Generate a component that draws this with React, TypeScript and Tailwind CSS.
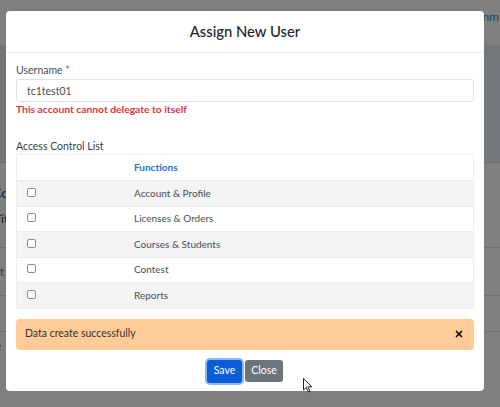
import { X } from "lucide-react"

const functions = [
  "Account & Profile",
  "Licenses & Orders",
  "Courses & Students",
  "Contest",
  "Reports",
]

function BackgroundPage() {
  return (
    <div className="flex flex-col w-[500px] h-[407px] bg-white text-[12px]">
      <div className="h-[45px] flex items-start justify-end pt-[8px] pr-[1px] gap-[20px] text-[#3d8fd6]">
        <span className="whitespace-nowrap shrink-0">Manage Accounts</span>
        <span className="whitespace-nowrap shrink-0">nm</span>
      </div>
      <div className="h-[118px] bg-[#e6eef6] border-b border-[#d0d7de]" />
      <div className="h-[58px] flex items-center font-bold text-[#1a6fc0] text-[14px] -ml-[8px]">
        Co
      </div>
      <div className="h-[16px] -mt-[10px] flex items-center -ml-[6px] text-[#333]">Title</div>
      <div className="h-[48px] mt-[20px] flex items-center -ml-[6px] border-t border-[#ddd] text-[#3d8fd6]">
        ct 3
      </div>
      <div className="h-[37px] border-t border-[#ddd] border-b" />
      <div className="h-[28px] flex items-center -ml-[8px] text-[#333]">le</div>
    </div>
  )
}

function Cursor() {
  return (
    <svg
      className="absolute left-[303px] top-[378px]"
      width="10"
      height="15"
      viewBox="0 0 10 15"
    >
      <path
        d="M0.5 0.5 L0.5 12 L3.3 9.4 L5.3 14 L7 13.3 L5 8.8 L8.8 8.8 Z"
        fill="#fff"
        stroke="#222"
        strokeWidth="1"
        strokeLinejoin="round"
      />
    </svg>
  )
}

export default function App() {
  return (
    <div
      className="relative w-[500px] h-[407px] overflow-hidden"
      style={{ fontFamily: 'Lato, "Open Sans", sans-serif' }}
    >
      <BackgroundPage />
      <div className="absolute inset-0 bg-black/50" />

      <div className="absolute inset-0 pt-[11px] pl-[6px]">
        <div className="w-[478px] bg-white rounded-[4px] flex flex-col">
          <div className="h-[42px] flex items-center justify-center border-b border-[#ececec]">
            <h5 className="text-[14.8px] font-medium text-[#212529]">Assign New User</h5>
          </div>

          <div className="px-[10px] pt-[9px] flex flex-col">
            <label className="text-[10.5px] leading-[16px] text-[#495057]">
              Username <span className="text-[#dc3545]">*</span>
            </label>
            <input
              readOnly
              value="tc1test01"
              className="mt-[1px] h-[23px] border border-[#dee2e6] rounded-[3px] px-[10px] text-[10.5px] text-[#495057] outline-none"
            />
            <div className="text-[10.3px] leading-[14px] font-bold text-[#dc3545]">
              This account cannot delegate to itself
            </div>

            <div className="mt-[23px] text-[10.5px] leading-[15px] text-[#3a3f44]">
              Access Control List
            </div>

            <div className="border border-[#eceeef] flex flex-col">
              <div className="h-[25px] flex items-center">
                <div className="w-[117px]" />
                <div className="text-[10px] font-bold text-[#1b75d0]">Functions</div>
              </div>
              {functions.map((name, i) => (
                <div
                  key={name}
                  className={`h-[25.5px] flex items-center border-t border-[#ebebeb] ${
                    i % 2 === 0 ? "bg-[#f4f4f4]" : "bg-white"
                  }`}
                >
                  <div className="w-[117px] pl-[10px] flex items-center -mt-[2px]">
                    <span className="w-[9px] h-[9px] border border-[#8a8f94] rounded-[2px] bg-white" />
                  </div>
                  <span className="text-[10px] text-[#4a4f54]">{name}</span>
                </div>
              ))}
            </div>

            <div className="mt-[10px] h-[31px] bg-[#ffcc99] rounded-[4px] flex items-center justify-between pl-[9px] pr-[10px]">
              <span className="text-[10.5px] text-[#3b3229]">Data create successfully</span>
              <X size={10} strokeWidth={4} className="text-black" />
            </div>
          </div>

          <div className="pt-[10px] pb-[8px] flex justify-center items-center gap-[3px]">
            <button className="w-[35px] h-[23px] bg-[#0b5ed7] text-white text-[10.5px] rounded-[3px] ring-2 ring-[#8ab8f5]">
              Save
            </button>
            <button className="w-[38px] h-[22px] bg-[#6c757d] text-white text-[10.5px] rounded-[3px]">
              Close
            </button>
          </div>
        </div>
      </div>

      <Cursor />
    </div>
  )
}
